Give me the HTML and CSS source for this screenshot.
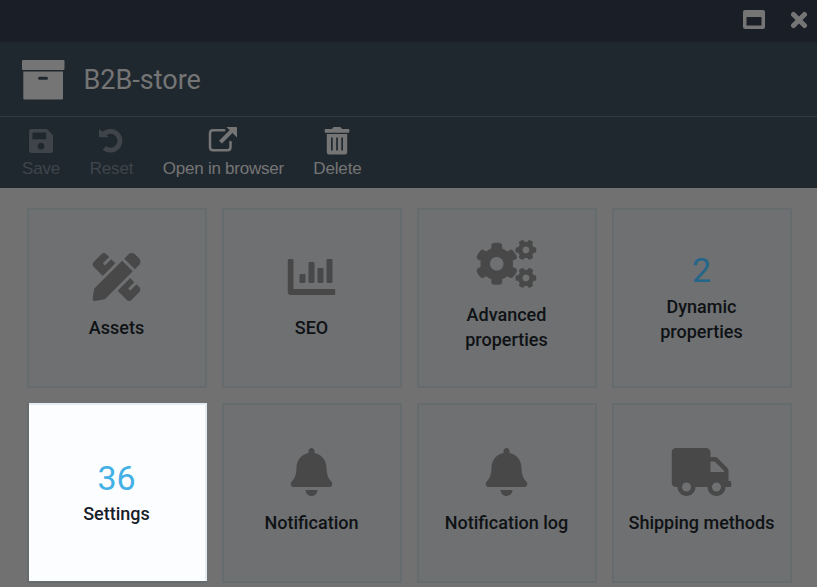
FILE: index.html
```html
<!DOCTYPE html>
<html lang="en">
<head>
<meta charset="utf-8">
<title>B2B-store</title>
<link rel="stylesheet" href="styles.css">
</head>
<body>
<div class="blade">
  <div class="topbar">
    <svg class="maximize" width="22" height="20" viewBox="0 0 22 20"><path fill-rule="evenodd" d="M2 0h18q2 0 2 2v15q0 2-2 2H2q-2 0-2-2V2q0-2 2-2zm1.500 7v8.500h15V7z"/></svg>
    <svg class="close" width="18" height="18" viewBox="0 0 18 18"><path d="M3.500 3.500l11 11M14.500 3.500l-11 11"/></svg>
  </div>
  <header class="head">
    <svg width="43" height="40" viewBox="0 0 43 40"><path fill-rule="evenodd" d="M1.200 0h40.100q1.200 0 1.200 1.200v7.600q0 1.200-1.200 1.200H1.200Q0 10 0 8.800V1.200Q0 0 1.200 0zM1.300 11.500h39.700v26.800q0 1.200-1.200 1.200H2.500q-1.200 0-1.200-1.200zM17.500 16.700a1.500 1.500 0 0 0 0 3h7a1.500 1.500 0 0 0 0-3z"/></svg>
    <h1>B2B-store</h1>
  </header>
  <nav class="toolbar">
    <div class="tool disabled"><svg width="24" height="28" viewBox="0 0 448 512"><path d="M433.941 129.941l-83.882-83.882A48 48 0 0 0 316.118 32H48C21.490 32 0 53.490 0 80v352c0 26.510 21.490 48 48 48h352c26.510 0 48-21.490 48-48V163.882a48 48 0 0 0-14.059-33.941zM224 416c-35.346 0-64-28.654-64-64s28.654-64 64-64 64 28.654 64 64-28.654 64-64 64zm96-304.520V212c0 6.627-5.373 12-12 12H76c-6.627 0-12-5.373-12-12V108c0-6.627 5.373-12 12-12h228.520c3.183 0 6.235 1.264 8.485 3.515l3.480 3.480A12 12 0 0 1 320 111.480z"/></svg><span>Save</span></div>
    <div class="tool disabled"><svg width="24" height="28" viewBox="0 0 24 28"><path class="arc" d="M4.800 7.200A9.400 9.400 0 1 1 5.300 20.800"/><path d="M0 3Q0 1.800 1 2.600L8.800 9.200Q9.700 10.300 8.400 10.300H.8Q0 10.300 0 9.500z"/></svg><span>Reset</span></div>
    <div class="tool wide"><svg width="30" height="28" viewBox="0 0 30 28"><path class="line" d="M16.200 3.200H5q-3 0-3 3v14q0 3 3 3h14.500q3 0 3-3V15"/><path class="shaft" d="M12.500 15.200L24.500 3.200"/><path d="M18.500 0h9.700q.8 0 .8.800v9.700z"/></svg><span>Open in browser</span></div>
    <div class="tool"><svg width="26" height="28" viewBox="0 0 26 28"><path fill-rule="evenodd" d="M1.500 2H8L9 .5q.3-.5 1-.5h6q.7 0 1 .5L18 2h6.500q.8 0 .8.800v2.200q0 .8-.8.800h-23q-.8 0-.8-.8V2.800q0-.8.800-.8zM2.800 7h20.400v18q0 2.500-2.500 2.500H5.300q-2.500 0-2.500-2.500zM7 10.500v13h1.700v-13zm5.200 0v13h1.700v-13zm5.100 0v13H19v-13z"/></svg><span>Delete</span></div>
  </nav>
  <main class="tiles">
    <div class="tile"><svg width="48" height="48" viewBox="0 0 512 512"><path d="M109.460 244.040l134.580-134.560-44.120-44.120-61.680 61.680a7.919 7.919 0 0 1-11.210 0l-11.210-11.210c-3.100-3.100-3.100-8.120 0-11.210l61.680-61.680-33.640-33.650C131.470-3.100 111.390-3.100 99 9.290L9.290 99c-12.380 12.390-12.390 32.470 0 44.860l100.170 100.180zm388.470-116.800c18.760-18.760 18.750-49.170 0-67.930l-45.250-45.250c-18.760-18.760-49.180-18.760-67.950 0l-46.020 46.010 113.200 113.200 46.020-46.030zM316.080 82.710l-297 296.960L.32 487.110c-2.530 14.490 10.090 27.110 24.590 24.560l107.450-18.840L429.280 195.900 316.080 82.710zm186.630 285.430l-33.640-33.640-61.680 61.680c-3.100 3.100-8.120 3.100-11.210 0l-11.210-11.210c-3.090-3.100-3.090-8.120 0-11.210l61.680-61.680-44.140-44.140L267.930 402.500l100.210 100.200c12.390 12.390 32.470 12.390 44.860 0l89.710-89.700c12.390-12.390 12.390-32.470 0-44.860z"/></svg><span>Assets</span></div>
    <div class="tile"><svg width="48" height="48" viewBox="0 0 512 512"><path d="M332.800 320h38.400c6.400 0 12.800-6.400 12.800-12.800V172.800c0-6.400-6.400-12.800-12.800-12.800h-38.400c-6.400 0-12.800 6.400-12.800 12.800v134.400c0 6.400 6.400 12.800 12.800 12.800zm96 0h38.400c6.400 0 12.800-6.400 12.800-12.800V76.800c0-6.400-6.400-12.800-12.800-12.800h-38.400c-6.400 0-12.800 6.400-12.800 12.800v230.400c0 6.400 6.400 12.800 12.800 12.800zm-288 0h38.400c6.400 0 12.800-6.400 12.800-12.800v-70.400c0-6.400-6.400-12.800-12.800-12.800h-38.400c-6.400 0-12.800 6.400-12.800 12.800v70.400c0 6.400 6.400 12.800 12.800 12.800zm96 0h38.400c6.400 0 12.800-6.400 12.800-12.800V108.800c0-6.400-6.400-12.800-12.800-12.800h-38.400c-6.400 0-12.800 6.400-12.800 12.800v198.400c0 6.400 6.400 12.800 12.800 12.800zM496 384H64V80c0-8.840-7.160-16-16-16H16C7.160 64 0 71.160 0 80v336c0 17.670 14.330 32 32 32h464c8.840 0 16-7.160 16-16v-32c0-8.840-7.160-16-16-16z"/></svg><span>SEO</span></div>
    <div class="tile"><svg width="60" height="48" viewBox="0 0 640 512"><path id="small-cog" d="M512.100 191l-8.200 14.300c-3 5.300-9.400 7.500-15.100 5.400-11.800-4.400-22.600-10.700-32.100-18.600-4.600-3.800-5.800-10.500-2.800-15.700l8.200-14.300c-6.900-8-12.300-17.300-15.900-27.400h-16.500c-6 0-11.200-4.300-12.200-10.300-2-12-2.100-24.600 0-37.100 1-6 6.200-10.400 12.200-10.400h16.500c3.600-10.100 9-19.400 15.900-27.400l-8.200-14.300c-3-5.200-1.900-11.900 2.800-15.700 9.500-7.900 20.400-14.200 32.100-18.600 5.700-2.100 12.100.1 15.100 5.400l8.200 14.300c10.500-1.900 21.200-1.900 31.700 0L552 6.300c3-5.300 9.400-7.500 15.100-5.400 11.800 4.400 22.600 10.700 32.100 18.600 4.600 3.800 5.800 10.500 2.800 15.700l-8.200 14.300c6.900 8 12.300 17.300 15.900 27.400h16.500c6 0 11.200 4.300 12.200 10.300 2 12 2.100 24.600 0 37.100-1 6-6.200 10.400-12.200 10.400h-16.500c-3.600 10.100-9 19.400-15.900 27.400l8.200 14.300c3 5.200 1.900 11.900-2.800 15.700-9.500 7.900-20.400 14.200-32.100 18.600-5.700 2.100-12.100-.1-15.100-5.400l-8.200-14.300c-10.400 1.900-21.200 1.900-31.700 0zm-10.500-58.800c38.500 29.600 82.400-14.300 52.800-52.800-38.500-29.700-82.400 14.300-52.800 52.800z"/><use href="#small-cog" y="299"/><path d="M386.300 286.100l33.700 16.800c10.100 5.800 14.500 18.100 10.500 29.100-8.900 24.200-26.400 46.400-42.600 65.800-7.400 8.900-20.200 11.100-30.300 5.300l-29.100-16.800c-16 13.700-34.600 24.600-54.900 31.700v33.600c0 11.600-8.300 21.600-19.700 23.600-24.600 4.200-50.400 4.400-75.900 0-11.500-2-20-11.900-20-23.600V418c-20.300-7.200-38.900-18-54.900-31.700L74 403c-10 5.800-22.900 3.600-30.300-5.300-16.200-19.400-33.300-41.600-42.200-65.700-4-10.900.4-23.200 10.500-29.100l33.300-16.800c-3.900-20.900-3.900-42.400 0-63.400L12 205.800c-10.100-5.800-14.600-18.100-10.500-29 8.900-24.200 26-46.400 42.200-65.800 7.400-8.900 20.200-11.100 30.300-5.300l29.100 16.800c16-13.700 34.600-24.600 54.900-31.700V57.100c0-11.500 8.200-21.500 19.600-23.500 24.600-4.200 50.500-4.400 76-.1 11.500 2 20 11.900 20 23.600v33.600c20.300 7.200 38.900 18 54.900 31.700l29.100-16.800c10-5.800 22.900-3.600 30.300 5.300 16.200 19.400 33.200 41.600 42.100 65.800 4 10.900.1 23.200-10 29.100l-33.700 16.800c3.900 21 3.900 42.500 0 63.500zm-117.600 21.100c59.200-77-28.700-164.900-105.700-105.700-59.200 77 28.700 164.900 105.700 105.700z"/></svg><span>Advanced properties</span></div>
    <div class="tile count"><strong>2</strong><span>Dynamic properties</span></div>
    <div class="tile count active"><strong>36</strong><span>Settings</span></div>
    <div class="tile"><svg width="42" height="48" viewBox="0 0 448 512"><path id="bell" d="M224 512c35.320 0 63.970-28.650 63.970-64H160.030c0 35.350 28.650 64 63.970 64zm215.390-149.710c-19.320-20.760-55.470-51.990-55.470-154.290 0-77.700-54.480-139.900-127.940-155.160V32c0-17.670-14.320-32-31.980-32s-31.980 14.330-31.980 32v20.840C118.560 68.100 64.080 130.300 64.080 208c0 102.300-36.150 133.530-55.470 154.290-6 6.450-8.660 14.160-8.610 21.710.11 16.400 12.980 32 32.100 32h383.800c19.120 0 32-15.600 32.100-32 .05-7.550-2.610-15.270-8.610-21.710z"/></svg><span>Notification</span></div>
    <div class="tile"><svg width="42" height="48" viewBox="0 0 448 512"><use href="#bell"/></svg><span>Notification log</span></div>
    <div class="tile"><svg width="60" height="48" viewBox="0 0 640 512"><path d="M624 352h-16V243.900c0-12.700-5.100-24.900-14.100-33.900L494 110.100c-9-9-21.200-14.100-33.900-14.100H416V48c0-26.500-21.500-48-48-48H48C21.500 0 0 21.500 0 48v320c0 26.500 21.500 48 48 48h16c0 53 43 96 96 96s96-43 96-96h128c0 53 43 96 96 96s96-43 96-96h48c8.800 0 16-7.200 16-16v-32c0-8.800-7.200-16-16-16zM160 464c-26.500 0-48-21.500-48-48s21.500-48 48-48 48 21.500 48 48-21.500 48-48 48zm320 0c-26.500 0-48-21.500-48-48s21.500-48 48-48 48 21.500 48 48-21.500 48-48 48zm80-208H416V144h44.100l99.900 99.900V256z"/></svg><span>Shipping methods</span></div>
  </main>
</div>
</body>
</html>
```
FILE: styles.css
```css
* { box-sizing: border-box; }
body { margin: 0; }
svg { display: block; fill: currentColor; flex: none; }
.blade {
  width: 817px;
  height: 587px;
  overflow: hidden;
  background: #717171;
  color: #757575;
  font-family: Roboto, sans-serif;
}
.topbar {
  height: 42px;
  background: #1a1e26;
  display: flex;
  justify-content: flex-end;
  gap: 25px;
  padding: 10px 9px 0 0;
}
.close {
  margin-top: 1px;
  fill: none;
  stroke: currentColor;
  stroke-width: 5;
  stroke-linecap: round;
}
.head {
  height: 74px;
  background: #20282f;
  display: flex;
  align-items: center;
  gap: 18.500px;
  padding: 2px 0 0 22px;
}
h1 { margin: 0; font-size: 27px; font-weight: 400; line-height: 36px; }
.toolbar {
  height: 72px;
  background: #20282f;
  border-top: 1px solid #313a44;
  display: flex;
  gap: 29.500px;
  padding: 10px 0 0 22px;
  font: 17px/20px "Liberation Sans", sans-serif;
}
.tool { display: flex; flex-direction: column; align-items: center; gap: 4px; letter-spacing: -.15px; }
.tool.wide { letter-spacing: -.25px; }
.tool.wide svg { margin-right: 1px; }
.tool span { white-space: nowrap; }
.disabled { color: #3f444b; }
.arc { fill: none; stroke: currentColor; stroke-width: 4.900; }
.line { fill: none; stroke: currentColor; stroke-width: 2.500; stroke-linecap: round; }
.shaft { stroke: currentColor; stroke-width: 4; }
.tiles {
  display: grid;
  grid-template-columns: repeat(4, 180px);
  grid-auto-rows: 180px;
  gap: 15px;
  padding: 20px 0 0 27px;
}
.tile {
  border: 2px solid #666b6e;
  background: #6e7072;
  color: #484848;
  display: flex;
  flex-direction: column;
  align-items: center;
  justify-content: center;
  gap: 14px;
  padding: 0 1px 4px 0;
  text-align: center;
}
.tile svg { margin-right: 1px; transform: translateX(.5px); }
.tile span {
  width: 160px;
  padding: 0 5px;
  font-size: 18px;
  font-weight: 500;
  line-height: 25px;
  color: #0f1215;
}
.tile strong { font-size: 34px; line-height: 40px; font-weight: 400; color: #24658a; }
.count { gap: 4px; padding-bottom: 3px; }
.active {
  gap: 3px;
  padding: 2px 3px 2px 0;
  background: #fcfdff;
  border-width: 0 0 2px 2px;
  box-shadow: inset -2px 2px #e4edf2;
}
.active strong { color: #43b0e6; }
.active span { color: #172029; }
```
